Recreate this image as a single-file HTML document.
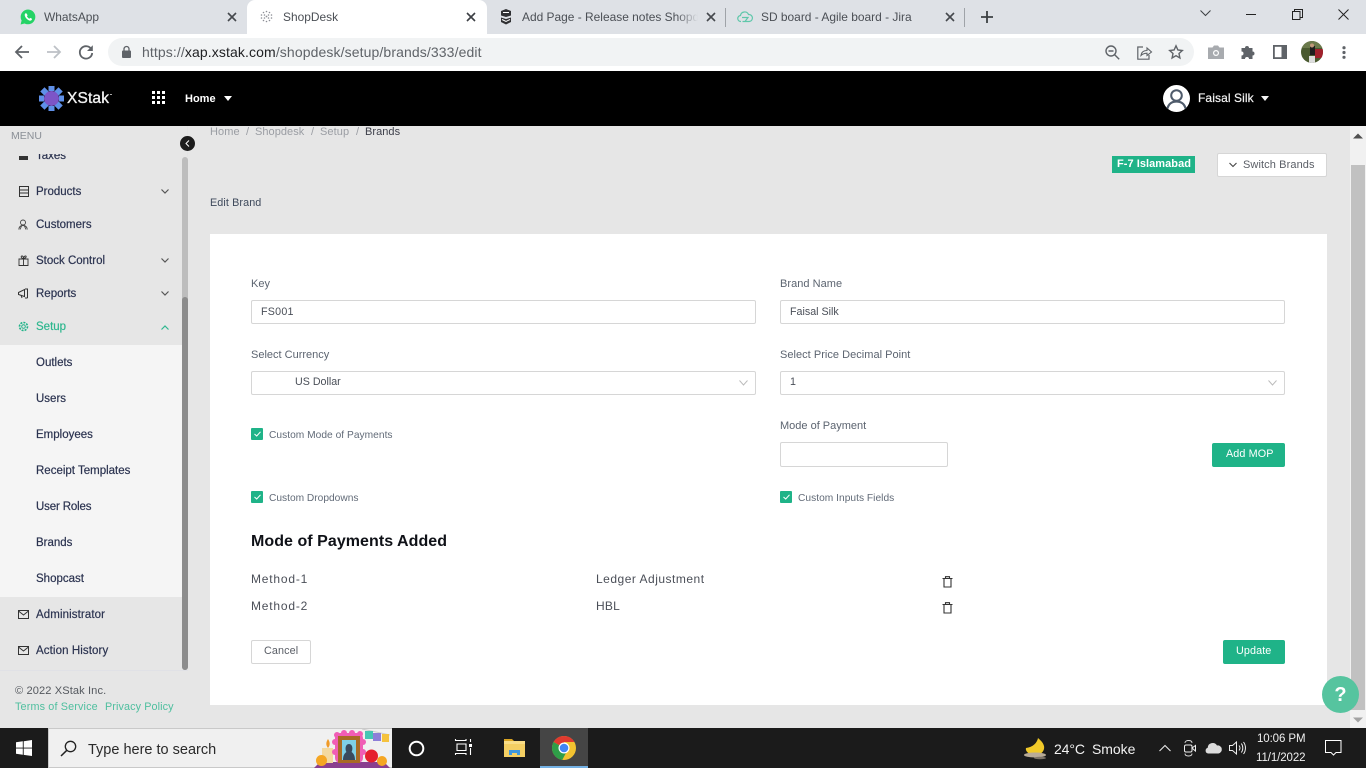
<!DOCTYPE html>
<html><head><meta charset="utf-8"><style>
*{box-sizing:border-box}
html,body{margin:0;padding:0;width:1366px;height:768px;overflow:hidden;background:#e6e6e6;font-family:"Liberation Sans",sans-serif}
.a{position:absolute}
.t{position:absolute;white-space:nowrap;line-height:16px;height:16px}
.b{position:absolute;background:#fff;border:1px solid #d6d6d6;border-radius:2px}
svg{position:absolute;overflow:visible}
.m{font-size:11.5px;color:#2b3350;-webkit-text-stroke:.2px #2b3350}
.l{font-size:11px;color:#5c6470}
.f{font-size:10.7px;color:#4a4f58}
.x{font-size:11.95px;color:#4b4f55}
.c{font-size:10.2px;color:#626b78}
.r{font-size:11px;color:#9a9da3}
</style></head><body>
<!-- tabstrip -->
<div class="a" style="left:0;top:0;width:1366px;height:34px;background:#dee1e6"></div>
<div class="a" style="left:247px;top:0;width:240px;height:34px;background:#fff;border-radius:8px 8px 0 0"></div>
<div class="a" style="left:0;top:34px;width:1366px;height:37px;background:#fff"></div>
<div class="a" style="left:108px;top:38px;width:1086px;height:28px;background:#f1f3f4;border-radius:14px"></div>

<svg style="left:20px;top:9px" width="16" height="16" viewBox="0 0 16 16"><path d="M8 .5a7.4 7.4 0 0 0-6.4 11L.6 15.500l4-1A7.400 7.400 0 1 0 8 .5z" fill="#25d366"/><path d="M5.500 4.300c-.8.600-1 1.700-.5 3 .7 1.800 2.300 3.500 4.200 4.200 1.200.4 2.100.1 2.600-.7l.2-1-1.800-.9-.8.9c-1-.4-2-1.400-2.500-2.500l.7-.8-.8-1.900z" fill="#fff"/></svg>
<div class="t x" style="left:44px;top:9px">WhatsApp</div>
<svg style="left:227px;top:12px" width="10" height="10"><path d="M1 1l8 8M9 1l-8 8" stroke="#45484d" stroke-width="1.600"/></svg>
<svg style="left:260px;top:10px" width="13" height="13"><g fill="#8d8f96"><circle cx="6.500" cy="1.500" r=".8"/><circle cx="3.500" cy="2.500" r=".8"/><circle cx="9.500" cy="2.500" r=".8"/><circle cx="1.500" cy="5" r=".8"/><circle cx="4.500" cy="5" r=".8"/><circle cx="8.500" cy="5" r=".8"/><circle cx="11.500" cy="5" r=".8"/><circle cx="1.500" cy="8" r=".8"/><circle cx="4.500" cy="8" r=".8"/><circle cx="8.500" cy="8" r=".8"/><circle cx="11.500" cy="8" r=".8"/><circle cx="3.500" cy="10.500" r=".8"/><circle cx="6.500" cy="11.500" r=".8"/><circle cx="9.500" cy="10.500" r=".8"/><circle cx="6.500" cy="6.500" r=".9"/></g></svg>
<div class="t x" style="left:283px;top:9px">ShopDesk</div>
<svg style="left:466px;top:12px" width="10" height="10"><path d="M1 1l8 8M9 1l-8 8" stroke="#3c3f44" stroke-width="1.600"/></svg>
<svg style="left:500px;top:9px" width="12" height="16"><path d="M6 0L11 2V6.500L6 8 1 6.500V2z" fill="#2f3033"/><path d="M1 8.500L6 10l5-1.500V13L6 15.500 1 13z" fill="#2f3033"/><path d="M3 3.500h6M2 10.500l4 2 4-2" stroke="#fff" stroke-width="1" fill="none"/></svg>
<div class="t x" style="left:522px;top:9px;width:176px;overflow:hidden">Add Page - Release notes Shopde</div>
<div class="a" style="left:676px;top:9px;width:22px;height:16px;background:linear-gradient(90deg,rgba(222,225,230,0),#dee1e6)"></div>
<svg style="left:706px;top:12px" width="10" height="10"><path d="M1 1l8 8M9 1l-8 8" stroke="#45484d" stroke-width="1.600"/></svg>
<div class="a" style="left:725px;top:8px;width:1px;height:19px;background:#9fa3a8"></div>
<svg style="left:737px;top:10px" width="16" height="13"><path d="M4 11.500a3 3 0 0 1-.5-6 4.200 4.200 0 0 1 8-1 3.500 3.500 0 0 1 .8 7H5.500M5 7.500h6l-3 4" fill="none" stroke="#5fc7aa" stroke-width="1.200"/></svg>
<div class="t x" style="left:761px;top:9px">SD board - Agile board - Jira</div>
<svg style="left:945px;top:12px" width="10" height="10"><path d="M1 1l8 8M9 1l-8 8" stroke="#45484d" stroke-width="1.600"/></svg>
<div class="a" style="left:964px;top:8px;width:1px;height:19px;background:#9fa3a8"></div>
<svg style="left:981px;top:11px" width="12" height="12"><path d="M6 0v12M0 6h12" stroke="#3c4043" stroke-width="1.800"/></svg>
<svg style="left:1200px;top:10px" width="11" height="7"><path d="M.5.500l5 5 5-5" fill="none" stroke="#3c4043"/></svg>
<div class="a" style="left:1246px;top:14px;width:10px;height:1px;background:#222"></div>
<svg style="left:1292px;top:9px" width="11" height="11"><path d="M.5 2.500h7.500v8H.5zM2.500 2.500V.5h8v8H8" fill="none" stroke="#222"/></svg>
<svg style="left:1338px;top:9px" width="11" height="11"><path d="M.5.500l10 10M10.500.500l-10 10" stroke="#222"/></svg>

<!-- toolbar -->
<svg style="left:14px;top:44px" width="16" height="16" viewBox="0 0 16 16"><path d="M15 8H2M8 2L2 8l6 6" fill="none" stroke="#5f6368" stroke-width="1.800"/></svg>
<svg style="left:46px;top:44px" width="16" height="16" viewBox="0 0 16 16"><path d="M1 8h13M8 2l6 6-6 6" fill="none" stroke="#bdc1c6" stroke-width="1.800"/></svg>
<svg style="left:78px;top:44px" width="16" height="16" viewBox="0 0 16 16"><path d="M13.500 5.500A6.200 6.200 0 1 0 14.200 9" fill="none" stroke="#5f6368" stroke-width="1.800"/><path d="M14.800 1.200V7H9z" fill="#5f6368"/></svg>
<svg style="left:122px;top:46px" width="9" height="12"><rect y="4.500" width="9" height="7.500" rx="1" fill="#5f6368"/><path d="M2 5V3a2.500 2.500 0 0 1 5 0v2" fill="none" stroke="#5f6368" stroke-width="1.300"/></svg>
<div class="t" style="left:142px;top:44px;font-size:14px;color:#5f6368;letter-spacing:.11px">https://<span style="color:#202124">xap.xstak.com</span>/shopdesk/setup/brands/333/edit</div>
<svg style="left:1105px;top:45px" width="15" height="15"><circle cx="6" cy="6" r="5" fill="none" stroke="#5f6368" stroke-width="1.400"/><path d="M3.500 6h5M9.700 9.700l4.500 4.500" stroke="#5f6368" stroke-width="1.400"/></svg>
<svg style="left:1137px;top:45px" width="15" height="15"><path d="M6 2H.8v12.200H12V10" fill="none" stroke="#5f6368" stroke-width="1.200"/><path d="M4 10.500C4.500 7 7 5.500 10 5.500V3l4.500 4L10 10.500V8.200C7.500 8.200 5.500 9 4 10.500z" fill="none" stroke="#5f6368" stroke-width="1.100"/></svg>
<svg style="left:1169px;top:45px" width="14" height="14"><path d="M7 .8l1.900 4.200 4.400.5-3.300 3 .9 4.500L7 10.700l-3.900 2.300.9-4.500-3.300-3 4.400-.5z" fill="none" stroke="#5f6368" stroke-width="1.400"/></svg>
<svg style="left:1208px;top:45px" width="16" height="14"><path d="M0 2.500h4.500L6 .5h4l1.500 2H16V14H0z" fill="#a8abaf"/><circle cx="8" cy="8" r="3" fill="#fff"/><circle cx="8" cy="8" r="1.800" fill="#a8abaf"/></svg>
<svg style="left:1241px;top:45px" width="15" height="15" viewBox="0 0 15 15"><path d="M0 4h3.500a2 2 0 0 1 4 0H11v3.500a2 2 0 0 1 0 4V15H7.500a2 2 0 0 0-4 0H0v-3.500a2 2 0 0 0 0-4z" fill="#5f6368" transform="translate(.5 -1)"/></svg>
<svg style="left:1273px;top:45px" width="14" height="14"><rect x=".9" y=".9" width="12.200" height="12.200" fill="none" stroke="#5f6368" stroke-width="1.800"/><rect x="8.500" y="1" width="5" height="12" fill="#5f6368"/></svg>
<svg style="left:1301px;top:41px" width="22" height="22"><defs><clipPath id="c"><circle cx="11" cy="11" r="11"/></clipPath></defs><g clip-path="url(#c)"><rect width="22" height="22" fill="#4a5a30"/><rect x="0" y="0" width="22" height="7" fill="#6b7a4c"/><rect x="9" y="5" width="5" height="9" fill="#1e1e1e"/><rect x="14" y="8" width="8" height="9" fill="#a0202c"/><rect x="8" y="15" width="6" height="7" fill="#ddd"/><circle cx="11" cy="4.500" r="2" fill="#c19a7b"/></g></svg>
<svg style="left:1342px;top:46px" width="4" height="13"><circle cx="2" cy="1.700" r="1.600" fill="#5f6368"/><circle cx="2" cy="6.500" r="1.600" fill="#5f6368"/><circle cx="2" cy="11.300" r="1.600" fill="#5f6368"/></svg>

<!-- sidebar -->
<div class="a" style="left:0;top:345px;width:182px;height:252px;background:#f5f5f5"></div>
<div class="t m" style="left:36px;top:148px">Taxes</div>
<div class="a" style="left:19px;top:156px;width:9px;height:4px;background:#333"></div>
<div class="a" style="left:0;top:126px;width:180px;height:28px;background:#e6e6e6"></div>
<div class="t" style="left:11px;top:128px;font-size:10.500px;color:#8a8f96">MENU</div>

<svg style="left:19px;top:186px" width="10" height="11"><path d="M.5.500h9v10h-9zM.5 4h9M.5 7h9" fill="none" stroke="#333" stroke-width="1"/></svg>
<div class="t m" style="left:36px;top:184px">Products</div>
<svg style="left:161px;top:189px" width="8" height="5"><path d="M.5.500L4 4 7.500.500" fill="none" stroke="#555" stroke-width="1.200"/></svg>
<svg style="left:18px;top:219px" width="11" height="12"><circle cx="5" cy="3.500" r="2.500" fill="none" stroke="#444" stroke-width=".9"/><path d="M.8 10.500C1 8 2.500 6.500 5 6.500S9 8 9.300 10.500M4 6l-2 4.500M6 6l2 4.500" fill="none" stroke="#444" stroke-width=".9"/></svg>
<div class="t m" style="left:36px;top:217px">Customers</div>
<svg style="left:18px;top:255px" width="11" height="11"><path d="M1 4h9v6.500H1zM.5 4h10M5.500 3v7.500M5.500 3.500C3 3.500 2.500 1 4 1s1.500 2.500 1.500 2.500S6 1 7.500 1 8 3.500 5.500 3.500z" fill="none" stroke="#333" stroke-width=".9"/></svg>
<div class="t m" style="left:36px;top:253px">Stock Control</div>
<svg style="left:161px;top:258px" width="8" height="5"><path d="M.5.500L4 4 7.500.500" fill="none" stroke="#555" stroke-width="1.200"/></svg>
<svg style="left:18px;top:288px" width="11" height="11"><path d="M.5 4.500l6-3v7l-6-2zM9.500.5v9.500M7 1h2.500M7 10h2.500M3 7l1 3" fill="none" stroke="#333" stroke-width="1"/></svg>
<div class="t m" style="left:36px;top:286px">Reports</div>
<svg style="left:161px;top:291px" width="8" height="5"><path d="M.5.500L4 4 7.500.500" fill="none" stroke="#555" stroke-width="1.200"/></svg>
<svg style="left:18px;top:321px" width="11" height="11"><circle cx="5.500" cy="5.500" r="1.800" fill="none" stroke="#1fb388"/><circle cx="5.500" cy="5.500" r="4" fill="none" stroke="#1fb388" stroke-width="1.600" stroke-dasharray="2 1.100"/></svg>
<div class="t" style="left:36px;top:319px;font-size:11.500px;color:#2fb78f;-webkit-text-stroke:.2px #2fb78f">Setup</div>
<svg style="left:161px;top:325px" width="8" height="5"><path d="M.5 4.500L4 1l3.500 3.500" fill="none" stroke="#2fb78f" stroke-width="1.200"/></svg>
<div class="t m" style="left:36px;top:355px">Outlets</div>
<div class="t m" style="left:36px;top:391px">Users</div>
<div class="t m" style="left:36px;top:427px">Employees</div>
<div class="t m" style="left:36px;top:463px">Receipt Templates</div>
<div class="t m" style="left:36px;top:499px;letter-spacing:-.15px">User Roles</div>
<div class="t m" style="left:36px;top:535px">Brands</div>
<div class="t m" style="left:36px;top:571px">Shopcast</div>
<svg style="left:18px;top:610px" width="11" height="9"><path d="M.5.500h10v8H.5zM.5 1l5 4 5-4" fill="none" stroke="#333"/></svg>
<div class="t m" style="left:36px;top:607px;letter-spacing:.1px">Administrator</div>
<svg style="left:18px;top:646px" width="11" height="9"><path d="M.5.500h10v8H.5zM.5 1l5 4 5-4" fill="none" stroke="#333"/></svg>
<div class="t m" style="left:36px;top:643px;letter-spacing:.1px">Action History</div>
<div class="a" style="left:0;top:670px;width:188px;height:1px;background:#e0e1e6"></div>
<div class="t" style="left:15px;top:683px;font-size:11.100px;color:#55595f;letter-spacing:.1px">© 2022 XStak Inc.</div>
<div class="t" style="left:15px;top:699px;font-size:10.800px;color:#4fbf9f;letter-spacing:.15px">Terms of Service</div>
<div class="t" style="left:105px;top:699px;font-size:10.800px;color:#4fbf9f;letter-spacing:.1px">Privacy Policy</div>
<!-- sidebar scrollbar -->
<div class="a" style="left:182px;top:157px;width:6px;height:513px;background:#bdbdbd;border-radius:3px"></div>
<div class="a" style="left:182px;top:297px;width:6px;height:373px;background:#8c8c8c;border-radius:3px"></div>
<div class="a" style="left:187px;top:126px;width:1px;height:31px;background:#e3e3e3"></div>
<div class="a" style="left:180px;top:136px;width:15px;height:15px;border-radius:50%;background:#1c1c1c"></div>
<svg style="left:185px;top:140px" width="5" height="7"><path d="M4 .5L1 3.500 4 6.500" fill="none" stroke="#fff"/></svg>

<!-- breadcrumb -->
<div class="t r" style="left:210px;top:124px;letter-spacing:.1px">Home</div>
<div class="t r" style="left:246px;top:124px">/</div>
<div class="t r" style="left:255px;top:124px;letter-spacing:.05px">Shopdesk</div>
<div class="t r" style="left:311px;top:124px">/</div>
<div class="t r" style="left:320px;top:124px;letter-spacing:.1px">Setup</div>
<div class="t r" style="left:356px;top:124px">/</div>
<div class="t r" style="left:365px;top:124px;color:#3d3f4a;letter-spacing:.05px">Brands</div>

<!-- black header -->
<div class="a" style="left:0;top:71px;width:1366px;height:55px;background:#000"></div>
<svg style="left:39px;top:86px" width="25" height="25" viewBox="0 0 25 25"><g fill="#5f90e8"><rect x="9.500" y="0" width="6" height="5"/><rect x="9.500" y="20" width="6" height="5"/><rect x="0" y="9.500" width="5" height="6"/><rect x="20" y="9.500" width="5" height="6"/><rect x="2.500" y="2.500" width="6" height="6" transform="rotate(45 5.500 5.500)"/><rect x="16.500" y="2.500" width="6" height="6" transform="rotate(45 19.500 5.500)"/><rect x="2.500" y="16.500" width="6" height="6" transform="rotate(45 5.500 19.500)"/><rect x="16.500" y="16.500" width="6" height="6" transform="rotate(45 19.500 19.500)"/></g><circle cx="12.500" cy="12.500" r="7.500" fill="#7d55c7"/></svg>
<div class="t" style="left:67px;top:90px;font-size:15.500px;color:#f0f0f0;-webkit-text-stroke:.35px #f0f0f0;letter-spacing:.15px;line-height:18px;height:18px">XStak</div>
<div class="a" style="left:110px;top:94px;width:2px;height:1px;background:#aaa"></div>
<svg style="left:152px;top:91px" width="13" height="13"><g fill="#fff"><rect width="3" height="3"/><rect x="5" width="3" height="3"/><rect x="10" width="3" height="3"/><rect y="5" width="3" height="3"/><rect x="5" y="5" width="3" height="3"/><rect x="10" y="5" width="3" height="3"/><rect y="10" width="3" height="3"/><rect x="5" y="10" width="3" height="3"/><rect x="10" y="10" width="3" height="3"/></g></svg>
<div class="t" style="left:185px;top:91px;font-size:11px;font-weight:bold;color:#fff">Home</div>
<svg style="left:224px;top:96px" width="8" height="5"><path d="M0 0h8L4 5z" fill="#fff"/></svg>
<svg style="left:1163px;top:85px" width="27" height="27" viewBox="0 0 27 27"><circle cx="13.500" cy="13.500" r="13.500" fill="#fff"/><circle cx="13.500" cy="10.500" r="5.300" fill="none" stroke="#4f5b6b" stroke-width="2"/><path d="M4.500 23.500c1-4.500 4.500-7 9-7s8 2.500 9 7" fill="none" stroke="#4f5b6b" stroke-width="2.200"/></svg>
<div class="t" style="left:1198px;top:90px;font-size:12px;color:#f4f4f4;-webkit-text-stroke:.2px #f4f4f4;letter-spacing:.1px">Faisal Silk</div>
<svg style="left:1261px;top:96px" width="8" height="5"><path d="M0 0h8L4 5z" fill="#f4f4f4"/></svg>

<!-- top right -->
<div class="a" style="left:1112px;top:156px;width:83px;height:17px;background:#1fb388"></div>
<div class="t" style="left:1117px;top:156px;font-size:11px;font-weight:bold;color:#fff;letter-spacing:.05px">F-7 Islamabad</div>
<div class="b" style="left:1217px;top:153px;width:110px;height:24px"></div>
<svg style="left:1229px;top:162px" width="8" height="6"><path d="M.5 1L4 4.500 7.500 1" fill="none" stroke="#444" stroke-width="1.100"/></svg>
<div class="t" style="left:1243px;top:157px;font-size:11px;color:#5a5e66;letter-spacing:.1px">Switch Brands</div>
<div class="t" style="left:210px;top:195px;font-size:10.800px;color:#3f4a5c;letter-spacing:.1px">Edit Brand</div>

<!-- card -->
<div class="a" style="left:210px;top:234px;width:1117px;height:471px;background:#fff"></div>
<div class="t l" style="left:251px;top:276px">Key</div>
<div class="t l" style="left:780px;top:276px;letter-spacing:.04px">Brand Name</div>
<div class="b" style="left:251px;top:300px;width:505px;height:24px"></div>
<div class="t f" style="left:261px;top:304px;letter-spacing:.25px">FS001</div>
<div class="b" style="left:780px;top:300px;width:505px;height:24px"></div>
<div class="t f" style="left:790px;top:304px">Faisal Silk</div>
<div class="t l" style="left:251px;top:347px">Select Currency</div>
<div class="t l" style="left:780px;top:347px;letter-spacing:.03px">Select Price Decimal Point</div>
<div class="b" style="left:251px;top:371px;width:505px;height:24px"></div>
<div class="t f" style="left:295px;top:374px">US Dollar</div>
<svg style="left:739px;top:380px" width="9" height="6"><path d="M.5.500L4.500 5l4-4.500" fill="none" stroke="#bbb"/></svg>
<div class="b" style="left:780px;top:371px;width:505px;height:24px"></div>
<div class="t f" style="left:790px;top:374px">1</div>
<svg style="left:1268px;top:380px" width="9" height="6"><path d="M.5.500L4.500 5l4-4.500" fill="none" stroke="#bbb"/></svg>

<div class="a" style="left:251px;top:428px;width:12px;height:12px;background:#1fb388;border-radius:1px"></div>
<svg style="left:254px;top:431px" width="7" height="6"><path d="M.5 3L2.700 5 6.500.8" fill="none" stroke="#fff"/></svg>
<div class="t c" style="left:269px;top:428px;letter-spacing:.03px">Custom Mode of Payments</div>
<div class="t l" style="left:780px;top:418px">Mode of Payment</div>
<div class="b" style="left:780px;top:442px;width:168px;height:25px"></div>
<div class="a" style="left:1212px;top:443px;width:73px;height:24px;background:#1fb388;border-radius:2px"></div>
<div class="t" style="left:1226px;top:446px;font-size:10.800px;color:#fff;letter-spacing:.1px">Add MOP</div>

<div class="a" style="left:251px;top:491px;width:12px;height:12px;background:#1fb388;border-radius:1px"></div>
<svg style="left:254px;top:494px" width="7" height="6"><path d="M.5 3L2.700 5 6.500.8" fill="none" stroke="#fff"/></svg>
<div class="t c" style="left:269px;top:491px">Custom Dropdowns</div>
<div class="a" style="left:780px;top:491px;width:12px;height:12px;background:#1fb388;border-radius:1px"></div>
<svg style="left:783px;top:494px" width="7" height="6"><path d="M.5 3L2.700 5 6.500.8" fill="none" stroke="#fff"/></svg>
<div class="t c" style="left:798px;top:491px;letter-spacing:.03px">Custom Inputs Fields</div>

<div class="t" style="left:251px;top:533px;font-size:16px;font-weight:bold;color:#0f1117;height:18px;line-height:18px;letter-spacing:.05px">Mode of Payments Added</div>
<div class="t" style="left:251px;top:571px;font-size:12px;color:#4b4f58;letter-spacing:.8px">Method-1</div>
<div class="t" style="left:596px;top:571px;font-size:12px;color:#4b4f58;letter-spacing:.5px">Ledger Adjustment</div>
<svg style="left:942px;top:576px" width="11" height="12"><path d="M.5 2.500h10M3.500 2.500V.7h4v1.800M2 2.500V11h7V2.500" fill="none" stroke="#333" stroke-width="1.100"/></svg>
<div class="t" style="left:251px;top:598px;font-size:12px;color:#4b4f58;letter-spacing:.8px">Method-2</div>
<div class="t" style="left:596px;top:598px;font-size:12px;color:#4b4f58;letter-spacing:.2px">HBL</div>
<svg style="left:942px;top:602px" width="11" height="12"><path d="M.5 2.500h10M3.500 2.500V.7h4v1.800M2 2.500V11h7V2.500" fill="none" stroke="#333" stroke-width="1.100"/></svg>
<div class="b" style="left:251px;top:640px;width:60px;height:24px"></div>
<div class="t" style="left:264px;top:643px;font-size:10.800px;color:#5a5e66;letter-spacing:.1px">Cancel</div>
<div class="a" style="left:1223px;top:640px;width:62px;height:24px;background:#1fb388;border-radius:2px"></div>
<div class="t" style="left:1236px;top:643px;font-size:10.800px;color:#fff;letter-spacing:.1px">Update</div>

<!-- page scrollbar -->
<div class="a" style="left:1350px;top:126px;width:16px;height:602px;background:#f1f1f1"></div>
<svg style="left:1353px;top:133px" width="10" height="6"><path d="M0 5.500L5 .5l5 5z" fill="#505050"/></svg>
<div class="a" style="left:1351px;top:165px;width:14px;height:545px;background:#c1c1c1"></div>
<svg style="left:1353px;top:717px" width="10" height="6"><path d="M0 .5l5 5 5-5z" fill="#a3a3a3"/></svg>
<div class="a" style="left:1322px;top:676px;width:37px;height:37px;border-radius:50%;background:#56c49f"></div>
<div class="t" style="left:1322px;top:685px;width:37px;text-align:center;font-size:20px;font-weight:bold;color:#fff;height:20px;line-height:20px">?</div>

<!-- taskbar -->
<div class="a" style="left:0;top:728px;width:1366px;height:40px;background:#1b1b1b"></div>
<svg style="left:16px;top:740px" width="16" height="16"><path d="M0 2.300L6.800 1.300V7.600H0zM7.700 1.200L16 0V7.600H7.700zM0 8.500H6.800V14.800L0 13.800zM7.700 8.500H16V16L7.700 14.900z" fill="#fff"/></svg>
<div class="a" style="left:48px;top:728px;width:344px;height:40px;background:#f0f0f0;border:1px solid #c9c9c9;border-right:0"></div>
<svg style="left:60px;top:740px" width="17" height="17"><circle cx="10.500" cy="6.500" r="5.200" fill="none" stroke="#222" stroke-width="1.300"/><path d="M6.800 10.300L1 16" stroke="#222" stroke-width="1.500"/></svg>
<div class="t" style="left:88px;top:741px;font-size:14.500px;color:#2a2a2a;height:18px;line-height:18px">Type here to search</div>
<svg style="left:314px;top:728px" width="78" height="40" viewBox="0 0 78 40"><path d="M0 40l6-6h64l6 6z" fill="#8a3f8f"/><rect x="8" y="20" width="11" height="15" fill="#f3d9a0"/><path d="M14 11c2 3 2.500 6 0 9-2.500-3-2-6 0-9z" fill="#f09a28"/><circle cx="7.500" cy="32.500" r="5.500" fill="#f5a623"/><rect x="21" y="5" width="28" height="30" rx="5" fill="#f05db5"/><g fill="#f05db5"><circle cx="23" cy="7" r="3"/><circle cx="30" cy="5" r="3"/><circle cx="38" cy="5" r="3"/><circle cx="46" cy="6" r="3"/><circle cx="49" cy="14" r="3"/><circle cx="49" cy="24" r="3"/><circle cx="21" cy="14" r="3"/><circle cx="21" cy="24" r="3"/></g><rect x="24" y="8" width="22" height="27" fill="#a86a25"/><rect x="28" y="12" width="14" height="20" fill="#7fd0e8"/><path d="M29 32c0-5 2-7 3.500-8-1.500-2-1.500-8 2.500-8s4 6 2.500 8c1.500 1 3.500 3 3.500 8z" fill="#3a4a5e"/><circle cx="57.500" cy="28" r="6.500" fill="#e5202e"/><circle cx="68" cy="33" r="5" fill="#f5a623"/><path d="M48 1l28 6" stroke="#ccc"/><rect x="51" y="3" width="8" height="8" fill="#45c6b4"/><rect x="59" y="5" width="8" height="8" fill="#8d7ed8"/><rect x="68" y="6" width="7" height="8" fill="#f5c23e"/></svg>
<svg style="left:408px;top:740px" width="17" height="17"><circle cx="8.500" cy="8.500" r="6.800" fill="none" stroke="#fff" stroke-width="2"/></svg>
<svg style="left:455px;top:739px" width="18" height="17"><path d="M.5 0v1.500H11V0M2 5h9v6.500H2zM.5 16v-1.500H11V16M15.500 0v3M15.500 9v7" fill="none" stroke="#fff" stroke-width="1.100"/><rect x="14" y="5" width="3" height="3" fill="#fff"/></svg>
<svg style="left:504px;top:739px" width="22" height="18"><path d="M0 0h8l2 2H0z" fill="#d9a422"/><rect x="0" y="2" width="21" height="16" fill="#f4cf63"/><rect x="0" y="2" width="21" height="3" fill="#f9dd86"/><path d="M5 16v-5h11v5h-3v-2H8v2z" fill="#3f97dd"/></svg>
<div class="a" style="left:540px;top:728px;width:48px;height:40px;background:#454545"></div>
<div class="a" style="left:540px;top:766px;width:48px;height:2px;background:#74b1e4"></div>
<svg style="left:552px;top:736px" width="24" height="24" viewBox="0 0 24 24"><circle cx="12" cy="12" r="12" fill="#f2c230"/><path d="M12 12L1.600 6A12 12 0 0 1 22.400 6H12z" fill="#e03a2f"/><path d="M1.600 6A12 12 0 0 0 10.300 23.900L15 15 12 12z" fill="#2f9e48"/><circle cx="12" cy="12" r="5.500" fill="#fff"/><circle cx="12" cy="12" r="4.300" fill="#4285f4"/></svg>

<!-- tray -->
<svg style="left:1023px;top:738px" width="24" height="22"><path d="M15 0c-1 5-5 9-12 10-1 3 3 7 9 7 6 0 10-4 9-9-1-4-4-6-6-8z" fill="#f0c929"/><ellipse cx="12" cy="17" rx="11" ry="2.500" fill="#b9ab97"/><ellipse cx="17" cy="20" rx="6" ry="1.300" fill="#7d7468"/></svg>
<div class="t" style="left:1054px;top:740px;font-size:14px;color:#f2f2f2;height:18px;line-height:18px;letter-spacing:-.1px">24°C</div>
<div class="t" style="left:1092px;top:740px;font-size:14px;color:#f2f2f2;height:18px;line-height:18px;letter-spacing:-.05px">Smoke</div>
<svg style="left:1159px;top:744px" width="12" height="8"><path d="M.5 7L6 1.500 11.500 7" fill="none" stroke="#e8e8e8" stroke-width="1.100"/></svg>
<svg style="left:1184px;top:740px" width="12" height="17"><path d="M1 3C1 1 3 .5 4.500.5S8 1 8 3M1 13.500C1 15.500 3 16 4.500 16S8 15.500 8 13.500" fill="none" stroke="#ddd" stroke-width=".9"/><rect x=".5" y="5" width="7.500" height="7" rx="1.500" fill="none" stroke="#eee"/><path d="M8 8l3.500-2.500v5.500z" fill="none" stroke="#eee"/></svg>
<svg style="left:1205px;top:741px" width="17" height="13"><path d="M3 12.500a3 3 0 0 1-.3-5.800A5 5 0 0 1 12 4.500a4 4 0 0 1 1.500 8z" fill="#dcdcdc"/></svg>
<svg style="left:1229px;top:741px" width="17" height="14"><path d="M.5 4.500h3L7.500 1v12l-4-3.500h-3z" fill="none" stroke="#eee"/><path d="M10 4.500c1.200 1.500 1.200 3.500 0 5M12.300 2.500c2 2.500 2 6.500 0 9M14.500 1c2.600 3.500 2.600 8.500 0 12" fill="none" stroke="#eee"/></svg>
<div class="t" style="left:1257px;top:731px;font-size:11.500px;color:#f0f0f0;letter-spacing:-.1px">10:06 PM</div>
<div class="t" style="left:1256px;top:750px;font-size:11.500px;color:#f0f0f0;letter-spacing:-.1px">11/1/2022</div>
<svg style="left:1325px;top:740px" width="17" height="16"><path d="M.5.500h15.500v12H11l-2.500 2.500-2.500-2.500H.5z" fill="none" stroke="#fff"/></svg>
</body></html>
